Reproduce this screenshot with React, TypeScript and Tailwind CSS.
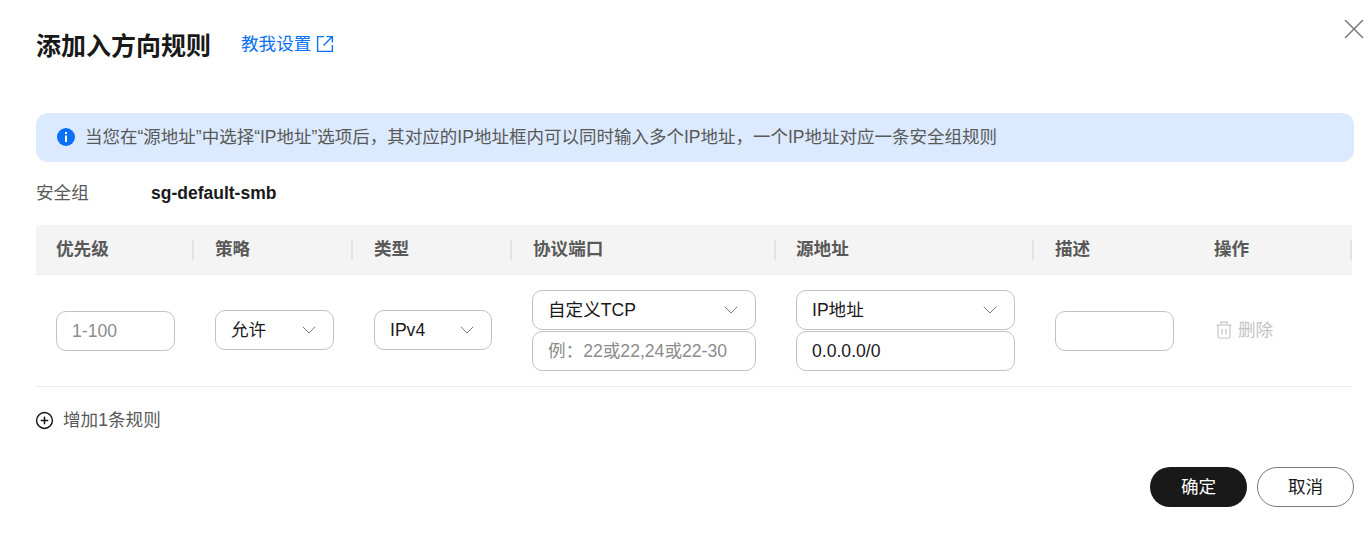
import { ChevronDown, CirclePlus, X } from "lucide-react";

const fontStack = "font-['Liberation_Sans','Noto_Sans_CJK_SC',sans-serif]";

const columns = [
  { title: "优先级", divider: "mr-[1px]" },
  { title: "策略", divider: "mr-[1px]" },
  { title: "类型", divider: "mr-[1px]" },
  { title: "协议端口", divider: "mr-0" },
  { title: "源地址", divider: "mr-[1px]" },
  { title: "描述", divider: "" },
  { title: "操作", divider: "mr-0" },
];

const gridCols = "grid-cols-[159px_159px_159px_263px_259px_159px_158px]";

function SelectBox({ label, width }: { label: string; width: string }) {
  return (
    <div
      className={`flex h-10 items-center justify-between rounded-[10px] border border-[#c2c2c2] bg-white pl-[15px] pr-[12px] text-[17.6px] text-[#191919] ${width}`}
    >
      <span>{label}</span>
      <ChevronDown size={24} strokeWidth={1} className="text-[#7a7a7a]" />
    </div>
  );
}

function TextBox({
  placeholder,
  value,
  width,
}: {
  placeholder?: string;
  value?: string;
  width: string;
}) {
  return (
    <input
      readOnly
      placeholder={placeholder}
      value={value ?? ""}
      className={`h-10 rounded-[10px] border border-[#c2c2c2] bg-white px-[15px] text-[17.6px] text-[#191919] outline-none placeholder:text-[#8c8c8c] ${width}`}
    />
  );
}

export default function App() {
  return (
    <div className={`relative h-[543px] w-[1370px] overflow-hidden bg-white pl-9 pr-4 ${fontStack}`}>
      <button className="absolute left-[1337px] top-[12px] text-[#7a7a7a]">
        <X size={34} strokeWidth={1.1} />
      </button>

      <div className="flex h-[113px] items-start pt-[29px]">
        <h2 className="text-[25px] font-bold leading-[34px] text-[#191919]">添加入方向规则</h2>
        <a className="ml-[30px] flex h-[30px] items-center gap-[5px] text-[17.6px] text-[#0a70f5]">
          教我设置
          <svg width="18" height="18" viewBox="0 0 18 18" fill="none" stroke="currentColor" strokeWidth="1.4">
            <path d="M8 1.6H1.6v14.8h14.8V10" />
            <path d="M7.5 10.5 16.4 1.6M10.6 1.6h5.8v5.8" />
          </svg>
        </a>
      </div>

      <div className="flex h-[49px] items-center rounded-[12px] bg-[#dbeafe] pl-[21px] text-[17.5px] text-[#595959]">
        <svg width="18" height="18" viewBox="0 0 18 18" className="mb-[2px] mr-[10px] shrink-0">
          <circle cx="9" cy="9" r="9" fill="#0a70f5" />
          <rect x="8" y="7.5" width="2" height="6.5" fill="#fff" />
          <rect x="8" y="4" width="2" height="2" fill="#fff" />
        </svg>
        当您在“源地址”中选择“IP地址”选项后，其对应的IP地址框内可以同时输入多个IP地址，一个IP地址对应一条安全组规则
      </div>

      <div className="flex h-[63px] items-center pb-[1px]">
        <span className="w-[115px] text-[17.6px] text-[#595959]">安全组</span>
        <span className="text-[17.5px] font-bold text-[#191919]">sg-default-smb</span>
      </div>

      <div className="w-[1316px]">
        <div className={`grid h-[50px] ${gridCols} border-b border-[#ededed] bg-[#f4f4f4]`}>
          {columns.map((col) => (
            <div key={col.title} className="flex items-center justify-between">
              <span className="pl-5 text-[17.6px] font-bold text-[#595959]">{col.title}</span>
              {col.divider && <span className={`h-5 w-0.5 bg-[#e3e3e3] ${col.divider}`} />}
            </div>
          ))}
        </div>

        <div className={`grid h-[112px] ${gridCols} items-center border-b border-[#ededed]`}>
          <div className="flex pl-5 pt-px">
            <TextBox placeholder="1-100" width="w-[119px]" />
          </div>
          <div className="pb-px pl-5">
            <SelectBox label="允许" width="w-[119px]" />
          </div>
          <div className="pb-px pl-5">
            <SelectBox label="IPv4" width="w-[118px]" />
          </div>
          <div className="flex flex-col gap-px pl-[19px]">
            <SelectBox label="自定义TCP" width="w-[224px]" />
            <TextBox placeholder="例：22或22,24或22-30" width="w-[224px]" />
          </div>
          <div className="flex flex-col gap-px pl-5">
            <SelectBox label="IP地址" width="w-[219px]" />
            <TextBox value="0.0.0.0/0" width="w-[219px]" />
          </div>
          <div className="flex pl-5 pt-px">
            <TextBox width="w-[119px]" />
          </div>
          <div className="flex items-center gap-[6px] pl-[22px] text-[17.6px] text-[#c4c4c4]">
            <svg width="16" height="18" viewBox="0 0 16 18" fill="none" stroke="currentColor" strokeWidth="1.2">
              <path d="M0.5 4h15M5 4V1.2h6V4M2 4v11.5a1.5 1.5 0 0 0 1.5 1.5h9a1.5 1.5 0 0 0 1.5-1.5V4M6 8v5.5M10 8v5.5" />
            </svg>
            删除
          </div>
        </div>
      </div>

      <div className="flex h-[67px] items-center gap-[9px] text-[17.6px] text-[#595959]">
        <CirclePlus size={19} strokeWidth={1.8} className="-ml-px text-[#111111]" />
        增加1条规则
      </div>

      <div className="mt-[13px] flex w-[1318px] justify-end gap-[10px]">
        <button className="h-10 w-[97px] rounded-full bg-[#191919] text-[17.6px] text-white">确定</button>
        <button className="h-10 w-[97px] rounded-full border border-[#7a7a7a] bg-white text-[17.6px] text-[#191919]">
          取消
        </button>
      </div>
    </div>
  );
}
